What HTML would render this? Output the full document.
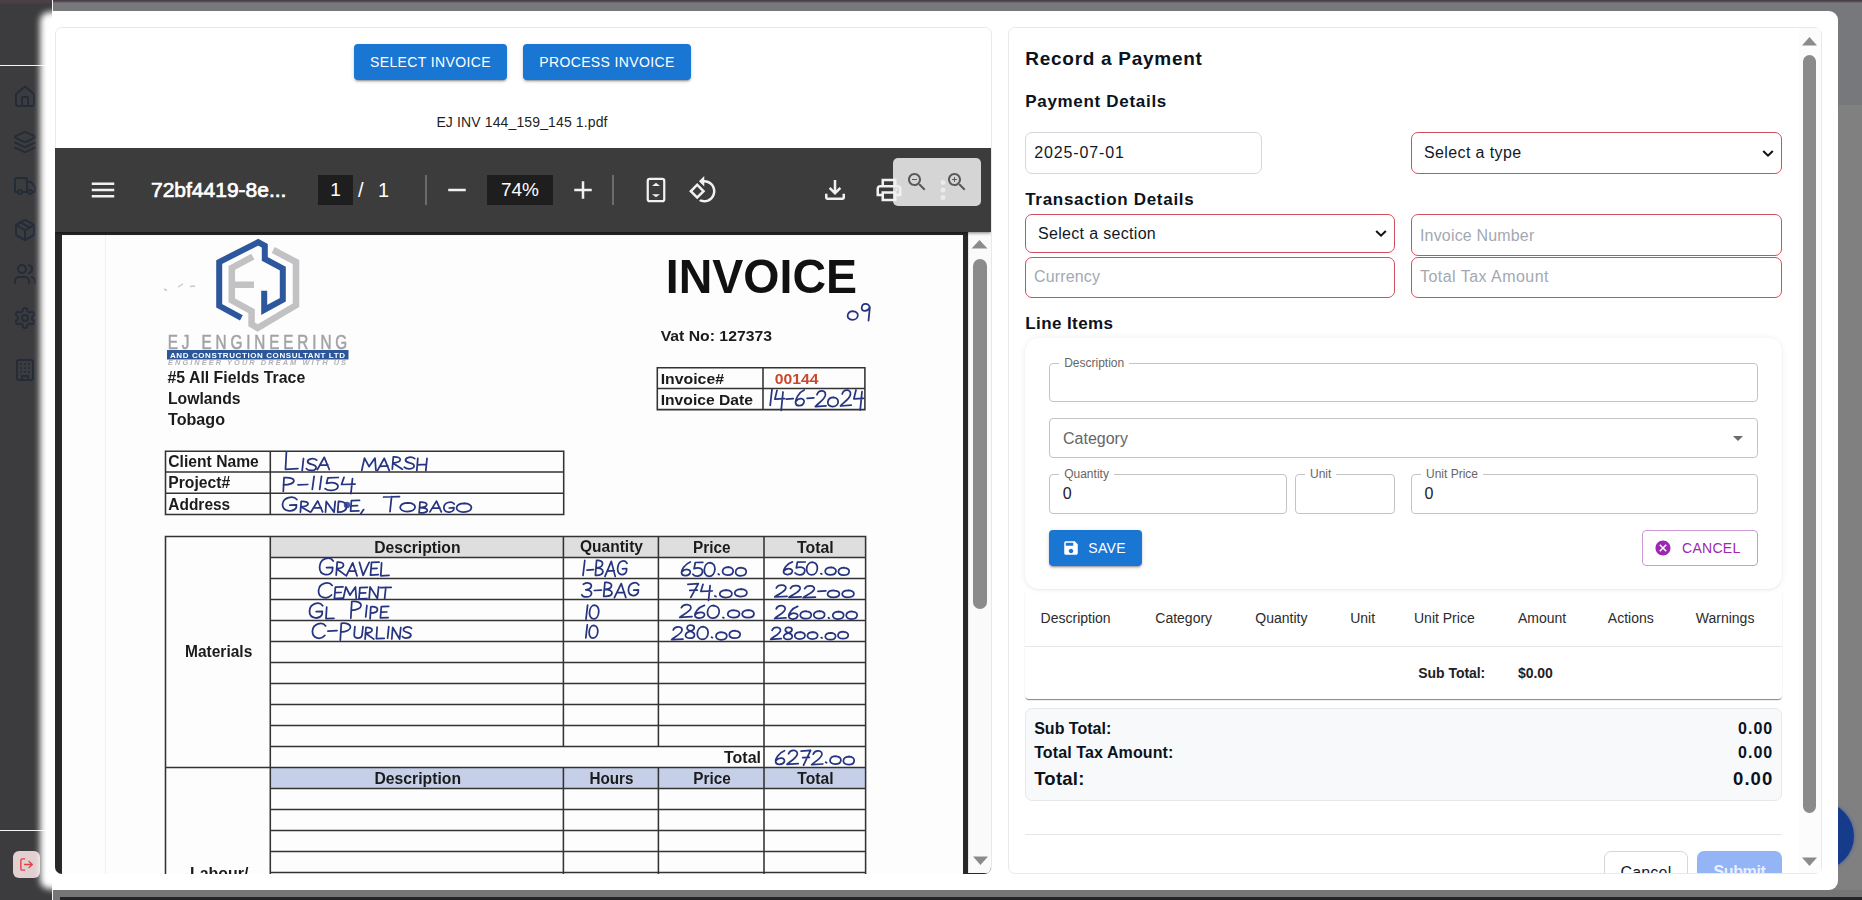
<!DOCTYPE html>
<html lang="en">
<head>
<meta charset="utf-8">
<title>Record a Payment</title>
<style>
*{box-sizing:border-box;margin:0;padding:0}
html,body{width:1862px;height:900px;overflow:hidden}
body{position:relative;background:#808081;font-family:"Liberation Sans",sans-serif;color:#111827}
.abs{position:absolute}
/* backdrop */
#topstrip{left:0;top:0;width:1862px;height:4px;background:linear-gradient(to bottom,#4a3f47 0,#4a3f47 1px,#77787b 3px)}
#botstrip{left:60px;top:897px;width:1802px;height:3px;background:#252527}
#botgray{left:53px;top:890px;width:1809px;height:10px;background:#767678}
#hdrband{left:53px;top:0;width:1809px;height:105px;background:#77787b}
#sidebar{left:0;top:0;width:52px;height:900px;background:#3c3c3e}
#sidetop{left:0;top:0;width:52px;height:5px;background:linear-gradient(to bottom,#4b4047 0,#4b4047 2px,#3c3c3e 5px)}
#sideline{left:52px;top:0;width:1px;height:900px;background:#f4f4f5}
#sidehr{left:0;top:65px;width:52px;height:1px;background:#f4f4f5}
#sidehr2{left:0;top:830px;width:52px;height:1px;background:#f4f4f5}
.sic{left:13px;width:24px;height:24px;stroke:#242b39;fill:none;stroke-width:2;stroke-linecap:round;stroke-linejoin:round}
#logout{left:13px;top:851px;width:27px;height:27px;border-radius:6px;background:#e2cfd0}
#logout svg{position:absolute;left:6px;top:6px;width:15px;height:15px;stroke:#e23d49;fill:none;stroke-width:2.2;stroke-linecap:round;stroke-linejoin:round}
#fab{left:1786px;top:802px;width:68px;height:68px;border-radius:34px;background:#173b8b;box-shadow:0 0 3px 1px rgba(70,95,160,.7)}
/* modal */
#halowrap{left:0;top:0;width:53px;height:900px;overflow:hidden}
#halo{left:39.5px;top:12px;width:60px;height:877px;background:#fff;border-radius:9px;filter:blur(3.2px)}
#modal{left:53px;top:11px;width:1785px;height:879px;background:#fff;border-radius:0 9px 9px 0}
.card{background:#fff;border:1px solid #e8e9ec;border-radius:7px}
#cardL{left:55px;top:27px;width:937px;height:847px;overflow:hidden}
#cardR{left:1008px;top:27px;width:814px;height:847px;overflow:hidden}
/* MUI buttons */
.mbtn{height:36px;border-radius:4px;background:#1976d2;color:#fff;font-size:14px;font-weight:400;letter-spacing:.38px;text-align:center;line-height:36px;box-shadow:0 3px 1px -2px rgba(0,0,0,.2),0 2px 2px 0 rgba(0,0,0,.14),0 1px 5px 0 rgba(0,0,0,.12);}
#fname{left:244px;top:85px;width:444px;text-align:center;letter-spacing:.13px;font-size:14px;line-height:18px;color:#1f1f1f}

/* PDF viewer */
#pdf{left:55px;top:148px;width:936px;height:725.5px;background:#282828;border-radius:0 0 7px 7px;overflow:hidden}
#ptb{left:0;top:0;width:936px;height:84px;background:#3c3c3c;box-shadow:0 1px 3px rgba(0,0,0,.5)}
.ti{fill:#f1f1f1;width:30px;height:30px}
#ptitle{left:96px;top:29px;font-size:21px;font-weight:400;line-height:26px;color:#fff;white-space:nowrap;-webkit-text-stroke:.7px #fff}
.pbox{background:#1e1e1e;color:#fff;font-size:19px;line-height:30px;height:30px;text-align:center}
.psep{width:2px;height:30px;top:27px;background:#6b6b6b}
#pov{left:838px;top:10px;width:88px;height:48px;border-radius:5px;background:#d5d5d5}
#page{left:7px;top:87px;width:901px;height:1275px;background:#fdfdfd;overflow:hidden;color:#151515}
#pscroll{left:912.5px;top:84px;width:24px;height:641px;background:#fafafa;border-left:1px solid #e6e6e6}
.sthumb{background:#8b8b8b;border-radius:7px}
/* form */
#form{left:1009px;top:28px;width:812px;height:845px;overflow:hidden;color:#0f172a}
.h1{font-weight:700;color:#0b1220}
.h2{font-weight:700;color:#0b1220}
.inp{border:1px solid #d4d7dd;border-radius:7px;background:#fff}
.inp.err{border-color:#d04f5e}
.val{color:#111827}
.ph{color:#a3a8b3}
.paper{border-radius:14px;background:#fff;box-shadow:0 0 6px rgba(0,0,0,.07),0 1px 2px rgba(0,0,0,.05)}
.fld{border:1px solid #c4c4c4;border-radius:4px}
.flab{position:absolute;left:9px;top:-9px;padding:0 5px;background:#fff;font-size:12px;line-height:16px;color:#666}
.fval{color:#212121}
.fph{color:#666}
.save{box-shadow:0 3px 1px -2px rgba(0,0,0,.2),0 2px 2px 0 rgba(0,0,0,.14),0 1px 5px 0 rgba(0,0,0,.12)}
.cbtn{border:1px solid #cf9ad9;border-radius:4px;color:#9c27b0;font-size:14px;line-height:34px;letter-spacing:.3px}
.th{color:#2b2b2b}
.tb{font-weight:700;color:#222;letter-spacing:-.05px}
.hr1{background:#e6e6e6}
.tpaper{border-radius:4px;box-shadow:0 2px 1px -1px rgba(0,0,0,.32),0 1px 1px 0 rgba(0,0,0,.2),0 1px 2px 0 rgba(0,0,0,.05)}
.sum{background:#f8f9fb;border:1px solid #e6e8ec;border-radius:7px}
.sl{font-weight:700;color:#0b1220}
.sv{font-weight:700;color:#0b1220;letter-spacing:1.05px;margin-left:1px}
.btnc{border:1px solid #d4d7dd;border-radius:7px;font-size:16px;letter-spacing:.2px;line-height:41px;text-align:center;color:#111827}
.btns{border-radius:7px;background:#93b4f5;font-size:16px;font-weight:700;letter-spacing:-.4px;line-height:41px;text-align:center;color:#eaf0ff}
.vs{background:#fcfcfc}
</style>
</head>
<body>
<!-- BACKDROP -->
<div class="abs" id="hdrband"></div>
<div class="abs" id="topstrip"></div>
<div class="abs" id="botgray"></div>
<div class="abs" id="botstrip"></div>
<div class="abs" id="fab"></div>
<div class="abs" id="sidebar"></div>
<div class="abs" id="sidetop"></div>
<div class="abs" id="sideline"></div>
<div class="abs" id="sidehr"></div>
<div class="abs" id="sidehr2"></div>
<svg class="abs sic" style="top:85px" viewBox="0 0 24 24"><path d="M15 21v-8a1 1 0 0 0-1-1h-4a1 1 0 0 0-1 1v8"/><path d="M3 10a2 2 0 0 1 .709-1.528l7-5.999a2 2 0 0 1 2.582 0l7 5.999A2 2 0 0 1 21 10v9a2 2 0 0 1-2 2H5a2 2 0 0 1-2-2z"/></svg>
<svg class="abs sic" style="top:130px" viewBox="0 0 24 24"><path d="m12.83 2.18a2 2 0 0 0-1.66 0L2.6 6.08a1 1 0 0 0 0 1.83l8.58 3.91a2 2 0 0 0 1.66 0l8.58-3.9a1 1 0 0 0 0-1.83Z"/><path d="m22 17.65-9.17 4.16a2 2 0 0 1-1.66 0L2 17.65"/><path d="m22 12.65-9.17 4.16a2 2 0 0 1-1.66 0L2 12.65"/></svg>
<svg class="abs sic" style="top:174px" viewBox="0 0 24 24"><path d="M14 18V6a2 2 0 0 0-2-2H4a2 2 0 0 0-2 2v11a1 1 0 0 0 1 1h2"/><path d="M15 18H9"/><path d="M19 18h2a1 1 0 0 0 1-1v-3.65a1 1 0 0 0-.22-.624l-3.48-4.35A1 1 0 0 0 17.52 8H14"/><circle cx="17" cy="18" r="2"/><circle cx="7" cy="18" r="2"/></svg>
<svg class="abs sic" style="top:218px" viewBox="0 0 24 24"><path d="M11 21.73a2 2 0 0 0 2 0l7-4A2 2 0 0 0 21 16V8a2 2 0 0 0-1-1.73l-7-4a2 2 0 0 0-2 0l-7 4A2 2 0 0 0 3 8v8a2 2 0 0 0 1 1.73z"/><path d="M12 22V12"/><path d="m3.3 7 7.703 4.734a2 2 0 0 0 1.994 0L20.7 7"/><path d="m7.5 4.27 9 5.15"/></svg>
<svg class="abs sic" style="top:262px" viewBox="0 0 24 24"><path d="M16 21v-2a4 4 0 0 0-4-4H6a4 4 0 0 0-4 4v2"/><circle cx="9" cy="7" r="4"/><path d="M22 21v-2a4 4 0 0 0-3-3.87"/><path d="M16 3.13a4 4 0 0 1 0 7.75"/></svg>
<svg class="abs sic" style="top:306px" viewBox="0 0 24 24"><path d="M12.22 2h-.44a2 2 0 0 0-2 2v.18a2 2 0 0 1-1 1.73l-.43.25a2 2 0 0 1-2 0l-.15-.08a2 2 0 0 0-2.73.73l-.22.38a2 2 0 0 0 .73 2.73l.15.1a2 2 0 0 1 1 1.72v.51a2 2 0 0 1-1 1.74l-.15.09a2 2 0 0 0-.73 2.73l.22.38a2 2 0 0 0 2.73.73l.15-.08a2 2 0 0 1 2 0l.43.25a2 2 0 0 1 1 1.73V20a2 2 0 0 0 2 2h.44a2 2 0 0 0 2-2v-.18a2 2 0 0 1 1-1.73l.43-.25a2 2 0 0 1 2 0l.15.08a2 2 0 0 0 2.73-.73l.22-.39a2 2 0 0 0-.73-2.73l-.15-.08a2 2 0 0 1-1-1.74v-.5a2 2 0 0 1 1-1.74l.15-.09a2 2 0 0 0 .73-2.73l-.22-.38a2 2 0 0 0-2.73-.73l-.15.08a2 2 0 0 1-2 0l-.43-.25a2 2 0 0 1-1-1.73V4a2 2 0 0 0-2-2z"/><circle cx="12" cy="12" r="3"/></svg>
<svg class="abs sic" style="top:358px" viewBox="0 0 24 24"><rect width="16" height="20" x="4" y="2" rx="2" ry="2"/><path d="M9 22v-4h6v4"/><path d="M8 6h.01"/><path d="M16 6h.01"/><path d="M12 6h.01"/><path d="M12 10h.01"/><path d="M12 14h.01"/><path d="M16 10h.01"/><path d="M16 14h.01"/><path d="M8 10h.01"/><path d="M8 14h.01"/></svg>
<div class="abs" id="logout"><svg viewBox="0 0 24 24"><path d="M9 21H5a2 2 0 0 1-2-2V5a2 2 0 0 1 2-2h4"/><polyline points="16 17 21 12 16 7"/><line x1="21" x2="9" y1="12" y2="12"/></svg></div>
<!-- MODAL -->
<div class="abs" id="halowrap"><div class="abs" id="halo"></div></div>
<div class="abs" id="modal"></div>
<div class="abs card" id="cardL">
  <div class="abs mbtn" style="left:298px;top:16px;width:153px">SELECT INVOICE</div>
  <div class="abs mbtn" style="left:467px;top:16px;width:168px">PROCESS INVOICE</div>
  <div class="abs" id="fname">EJ INV 144_159_145 1.pdf</div>
</div>
<div class="abs" id="pdf">
  <div class="abs" id="page">
  <!--PAGE0-->
<svg class="abs" style="left:0;top:0;filter:blur(.45px)" width="901" height="640" viewBox="0 0 901 640" font-family="Liberation Sans, sans-serif">
<rect x="43" y="0" width="1" height="640" fill="#f1f1f1"/><rect x="906" y="0" width="1" height="640" fill="#f1f1f1"/>
<path d="M102,54 l3,1.500 M116,52 l5,-3 M128,51.500 l5,-.5" stroke="#c9c9c9" stroke-width="1.400" fill="none"/>
<g fill="none" stroke-linejoin="miter" stroke-linecap="butt">
<path d="M211.2,15 L234,27 L234,70.2 L195.600,93 L189.600,89.400 L189.600,76.200 L169.800,65.400 L169.800,33 L190.800,21.600 M169.800,49.800 L192,49.800" stroke="#c2c2c4" stroke-width="6.5"/>
<path d="M179.400,82.800 L157.200,70.800 L157.200,27 L196.200,7.200 L202.800,10.800 L202.800,24 L220.800,33.600 L220.800,64.800 L202.200,75 L202.200,55.800" stroke="#2c579c" stroke-width="6"/>
</g>
<g transform="translate(105.8,114.2) scale(.78,1)"><text x="0" y="0" font-size="19.6" fill="#a3a3a7" stroke="#a3a3a7" stroke-width=".55" textLength="230" lengthAdjust="spacing">EJ ENGINEERING</text></g>
<rect x="105" y="115" width="181.500" height="9.500" fill="#2d5698"/>
<text x="108" y="122.8" font-size="8" font-weight="700" fill="#fff" textLength="175" lengthAdjust="spacing">AND CONSTRUCTION CONSULTANT LTD</text>
<text x="106" y="130.2" font-size="7.4" font-style="italic" font-weight="700" fill="#b2b2b6" textLength="178" lengthAdjust="spacing">ENGINEER YOUR DREAM WITH US</text>
<text x="105.5" y="148" font-size="16.2" font-weight="700" fill="#1b1b1b" textLength="137.7" lengthAdjust="spacingAndGlyphs">#5 All Fields Trace</text>
<text x="106" y="169" font-size="16.2" font-weight="700" fill="#1b1b1b" textLength="72.5" lengthAdjust="spacingAndGlyphs">Lowlands</text>
<text x="106" y="190" font-size="16.2" font-weight="700" fill="#1b1b1b" textLength="57" lengthAdjust="spacingAndGlyphs">Tobago</text>
<text x="603.8" y="57.6" font-size="48.5" font-weight="700" fill="#111" textLength="191.2" lengthAdjust="spacingAndGlyphs">INVOICE</text>
<text x="598.7" y="105.6" font-size="15.5" font-weight="700" fill="#1b1b1b" textLength="111.3" lengthAdjust="spacingAndGlyphs">Vat No: 127373</text>
<text x="598.7" y="148.9" font-size="15.5" font-weight="700" fill="#1b1b1b" textLength="63.3" lengthAdjust="spacingAndGlyphs">Invoice#</text>
<text x="598.7" y="169.5" font-size="15.5" font-weight="700" fill="#1b1b1b" textLength="92.3" lengthAdjust="spacingAndGlyphs">Invoice Date</text>
<text x="712.7" y="148.9" font-size="15.5" font-weight="700" fill="#c9482c" textLength="43.7" lengthAdjust="spacingAndGlyphs">00144</text>
<text x="106.3" y="231.9" font-size="15.8" font-weight="700" fill="#1b1b1b" textLength="90.5" lengthAdjust="spacingAndGlyphs">Client Name</text>
<text x="106.3" y="253.2" font-size="15.8" font-weight="700" fill="#1b1b1b" textLength="61.9" lengthAdjust="spacingAndGlyphs">Project#</text>
<text x="106.3" y="275.2" font-size="15.8" font-weight="700" fill="#1b1b1b" textLength="61.9" lengthAdjust="spacingAndGlyphs">Address</text>
<rect x="208.3" y="301.5" width="595.3" height="21.0" fill="#dedede"/>
<rect x="208.3" y="532.5" width="595.3" height="21.0" fill="#c6cfe8"/>
<text x="312.2" y="318" font-size="16" font-weight="700" fill="#1b1b1b" textLength="86.3" lengthAdjust="spacingAndGlyphs">Description</text>
<text x="518" y="317.4" font-size="16" font-weight="700" fill="#1b1b1b" textLength="63" lengthAdjust="spacingAndGlyphs">Quantity</text>
<text x="631" y="317.8" font-size="16" font-weight="700" fill="#1b1b1b" textLength="37.5" lengthAdjust="spacingAndGlyphs">Price</text>
<text x="735" y="317.8" font-size="16" font-weight="700" fill="#1b1b1b" textLength="36.6" lengthAdjust="spacingAndGlyphs">Total</text>
<text x="123" y="421.7" font-size="16.3" font-weight="700" fill="#1b1b1b" textLength="67.3" lengthAdjust="spacingAndGlyphs">Materials</text>
<text x="662" y="527.7" font-size="16" font-weight="700" fill="#1b1b1b" textLength="37" lengthAdjust="spacingAndGlyphs">Total</text>
<text x="312.5" y="549" font-size="16" font-weight="700" fill="#1b1b1b" textLength="86.5" lengthAdjust="spacingAndGlyphs">Description</text>
<text x="527.5" y="549" font-size="16" font-weight="700" fill="#1b1b1b" textLength="44.0" lengthAdjust="spacingAndGlyphs">Hours</text>
<text x="631.3" y="549" font-size="16" font-weight="700" fill="#1b1b1b" textLength="37.4" lengthAdjust="spacingAndGlyphs">Price</text>
<text x="735.3" y="549" font-size="16" font-weight="700" fill="#1b1b1b" textLength="36.2" lengthAdjust="spacingAndGlyphs">Total</text>
<text x="128" y="643.5" font-size="16.3" font-weight="700" fill="#1b1b1b" textLength="58.5" lengthAdjust="spacingAndGlyphs">Labour/</text>
<path d="M595.3,132.8H802.9 M595.3,153.5H802.9 M595.3,174.6H802.9 M595.3,132V175.4 M701,132V175.4 M802.9,132V175.4 M103.5,216.2H501.7 M103.5,237H501.7 M103.5,258.2H501.7 M103.5,279.4H501.7 M103.5,215.4V280.2 M208.3,215.4V280.2 M501.7,215.4V280.2 M103.5,301.5H803.6 M208.3,322.5H803.6 M208.3,343.5H803.6 M208.3,364.5H803.6 M208.3,385.5H803.6 M208.3,406.5H803.6 M208.3,427.5H803.6 M208.3,448.5H803.6 M208.3,469.5H803.6 M208.3,490.5H803.6 M208.3,511.5H803.6 M103.5,532.5H803.6 M208.3,553.5H803.6 M208.3,574.5H803.6 M208.3,595.5H803.6 M208.3,616.5H803.6 M208.3,637.5H803.6 M208.3,658.5H803.6 M208.3,679.5H803.6 M208.3,700.5H803.6 M103.5,300.7V700.5 M208.3,300.7V700.5 M803.6,300.7V700.5 M501.4,301.5V511.5 M596.4,301.5V511.5 M702,301.5V700.5 M501.4,532.5V700.5 M596.4,532.5V700.5" stroke="#333" stroke-width="1.55" fill="none"/>
<path d="M224.4,217.3 L223.5,234.3 L235.9,233.7 M241.5,223.5 L240.2,235.7 M254.7,225.1 C252.0,222.7 245.2,223.3 245.7,227.0 C246.2,230.0 254.4,228.8 254.1,232.5 C253.9,236.2 246.4,236.2 244.4,233.7 M255.4,234.5 L262.3,222.3 L267.3,234.5 M258.0,230.2 L265.9,229.8 M299.8,235.3 L302.5,223.1 L307.1,231.6 L313.0,223.1 L313.9,235.3 M315.4,235.6 L322.3,223.3 L327.3,235.6 M318.0,231.3 L325.9,230.9 M330.3,234.2 L331.3,221.9 C340.2,221.3 341.2,227.4 330.8,228.1 L340.4,234.2 M352.7,223.6 C349.9,221.2 343.2,221.8 343.6,225.5 C344.1,228.5 352.4,227.3 352.1,231.0 C351.8,234.6 344.4,234.6 342.3,232.2 M355.8,223.4 L354.8,235.7 M365.0,223.4 L363.8,235.7 M355.3,229.8 L364.3,229.3 M221.3,256.4 L222.0,242.7 C235.7,241.7 235.0,249.9 221.4,249.9 M236.0,249.8 L245.7,249.5 M252.1,241.3 L250.3,254.3 M259.5,241.4 L257.7,254.4 M276.2,242.5 L265.9,242.8 L264.5,248.4 C272.4,246.4 277.0,249.0 275.8,252.3 C274.5,256.2 265.8,256.2 263.1,253.6 M282.0,242.4 L279.5,249.5 L293.1,249.1 M290.5,243.7 L288.9,258.6 M234.9,264.5 C231.3,260.0 221.1,262.3 220.6,269.0 C220.0,276.5 230.8,278.0 234.2,272.8 L234.5,269.8 L227.9,270.1 M238.4,277.1 L239.2,266.3 C247.9,265.7 248.9,271.1 238.8,271.7 L248.1,277.1 M249.1,276.8 L255.7,266.0 L260.6,276.8 M251.6,273.0 L259.2,272.7 M263.5,277.2 L264.3,266.4 L272.1,277.2 L273.2,266.4 M276.5,266.4 L275.7,277.2 C287.1,277.8 288.0,265.9 276.5,266.4 M297.5,265.4 L289.4,265.6 L288.6,276.2 L296.9,275.9 M289.0,270.8 L295.5,270.6 M301.6,274.6 L298.6,279.1 M321.6,262.0 L337.5,261.6 M329.6,261.6 L328.0,276.6 M346.4,267.8 C336.0,267.8 335.3,276.5 345.3,276.5 C355.3,276.5 356.0,267.8 345.6,268.0 M358.0,267.1 L357.1,277.9 M358.0,267.1 C367.3,266.6 366.9,272.5 357.5,272.5 C368.3,272.5 367.8,278.4 357.1,277.9 M367.9,276.9 L374.5,266.1 L379.3,276.9 M370.3,273.2 L377.9,272.8 M392.2,269.0 C389.6,265.7 382.3,267.3 381.9,272.2 C381.5,277.6 389.3,278.7 391.7,274.9 L391.9,272.7 L387.2,273.0 M402.7,268.3 C392.4,268.3 391.7,277.0 401.6,277.0 C411.6,277.0 412.3,268.3 401.9,268.4 M271.2,326.0 C267.9,320.6 258.3,323.3 257.7,331.4 C256.9,340.4 267.1,342.2 270.4,335.9 L270.7,332.3 L264.5,332.7 M274.2,340.1 L275.2,327.2 C283.3,326.5 284.2,333.0 274.7,333.7 L283.3,340.1 M284.3,340.8 L290.7,327.8 L295.0,340.8 M286.6,336.2 L293.8,335.9 M297.4,327.3 L301.1,340.3 L307.1,327.3 M317.1,327.1 L309.5,327.4 L308.5,340.1 L316.3,339.7 M309.0,333.6 L315.1,333.3 M319.6,327.8 L318.8,340.8 L327.0,340.4 M270.2,350.4 C266.8,345.6 257.2,348.0 256.6,355.2 C255.9,363.2 265.3,364.8 269.5,360.0 M281.0,351.9 L273.4,352.2 L272.4,363.5 L280.4,363.1 M272.9,357.7 L279.1,357.5 M281.3,363.6 L283.9,352.0 L288.0,360.1 L293.4,352.0 L294.3,363.6 M305.5,352.3 L297.9,352.6 L297.0,363.8 L304.9,363.5 M297.4,358.1 L303.6,357.9 M307.2,363.5 L308.1,351.9 L315.4,363.5 L316.6,351.9 M318.3,352.6 L329.2,352.3 M323.8,352.3 L322.6,363.8 M260.7,370.8 C257.5,366.0 248.1,368.4 247.6,375.6 C246.9,383.6 256.8,385.2 260.0,379.6 L260.3,376.4 L254.2,376.7 M264.7,372.1 L264.0,383.6 L272.0,383.3 M288.8,383.3 L289.8,366.5 C302.7,365.3 301.9,375.3 289.1,375.3 M304.9,370.5 L303.7,382.0 M308.1,383.9 L308.8,371.8 C318.1,370.9 317.5,378.1 308.3,378.1 M326.7,371.4 L319.3,371.7 L318.4,382.9 L326.1,382.6 M318.9,377.2 L324.8,377.0 M263.6,390.9 C260.4,386.1 251.1,388.5 250.5,395.7 C249.9,403.7 258.8,405.3 262.8,400.5 M265.9,396.1 L275.0,395.6 M278.3,405.1 L279.3,388.3 C292.0,387.0 291.2,397.1 278.6,397.1 M292.9,391.7 L292.2,399.7 C291.9,404.3 299.7,404.3 300.1,399.7 L301.0,391.7 M303.1,404.1 L304.0,392.5 C311.8,392.0 312.7,397.7 303.5,398.3 L311.9,404.1 M315.1,392.2 L314.4,403.7 L322.2,403.4 M326.8,391.6 L325.6,403.2 M329.8,404.0 L330.7,392.5 L337.6,404.0 L338.8,392.5 M349.5,393.3 C347.1,391.0 341.1,391.6 341.5,395.0 C341.9,397.9 349.2,396.8 348.9,400.2 C348.6,403.7 342.1,403.7 340.4,401.4 M522.8,325.5 L521.0,340.5 M525.0,335.1 L531.5,334.6 M534.6,325.3 L533.4,340.3 M534.6,325.3 C543.0,324.6 542.3,332.8 534.0,332.8 C543.6,332.8 543.0,341.1 533.4,340.3 M543.0,341.4 L549.3,326.4 L553.2,341.4 M545.3,336.1 L552.2,335.7 M565.0,328.3 C562.8,323.8 556.3,326.0 555.7,332.8 C555.1,340.3 562.0,341.8 564.4,336.5 L564.6,333.5 L560.4,333.8 M521.4,349.3 C525.9,346.5 530.7,348.6 529.0,352.1 C528.1,354.2 523.8,354.9 523.8,354.9 C532.4,354.9 530.3,362.6 524.0,361.9 C521.8,361.9 520.5,361.2 519.9,359.8 M532.3,355.5 L539.4,355.1 M542.9,347.4 L541.7,361.4 M542.9,347.4 C552.2,346.7 551.5,354.4 542.3,354.4 C553.0,354.4 552.4,362.1 541.7,361.4 M552.4,362.6 L559.2,348.6 L563.8,362.6 M554.9,357.7 L562.5,357.3 M576.8,350.0 C574.3,345.8 567.0,347.9 566.5,354.2 C565.9,361.2 573.6,362.6 576.1,357.7 L576.4,354.9 L571.7,355.2 M525.6,370.1 L524.0,384.1 M532.9,370.2 C526.6,369.9 525.4,383.9 531.6,383.9 C537.8,383.9 538.9,369.9 532.2,370.4 M525.3,389.9 L523.8,402.9 M532.2,390.4 C526.3,390.1 525.2,403.1 531.0,403.1 C536.8,403.1 537.8,390.1 531.5,390.6 M628.3,327.0 C622.5,329.1 619.2,335.4 619.6,338.2 C620.1,341.7 627.2,341.7 628.2,337.5 C628.8,334.0 622.9,333.3 620.0,336.8 M640.8,327.3 L633.3,327.5 L632.1,333.6 C637.9,331.5 641.3,334.3 640.3,337.8 C639.2,342.0 632.9,342.0 630.9,339.2 M648.5,327.6 C641.1,327.3 640.0,341.3 647.1,341.3 C654.2,341.3 655.3,327.3 647.6,327.8 M656.3,339.0 L657.1,339.6 M666.5,332.1 C659.1,332.1 658.5,340.2 665.6,340.2 C672.7,340.2 673.3,332.1 665.9,332.2 M679.6,332.7 C672.2,332.7 671.5,340.8 678.6,340.8 C685.7,340.8 686.4,332.7 679.0,332.8 M625.8,349.3 L636.4,348.6 L628.8,362.3 M627.8,355.4 L635.3,355.1 M641.0,349.3 L638.8,356.4 L650.2,356.0 M648.1,350.6 L646.5,365.5 M652.9,361.0 L653.9,361.5 M664.5,355.0 C656.0,355.0 655.4,362.5 663.6,362.5 C671.7,362.5 672.3,355.0 663.8,355.2 M679.5,354.0 C671.0,354.0 670.4,361.5 678.5,361.5 C686.7,361.5 687.3,354.0 678.8,354.1 M619.4,372.6 C621.3,368.1 629.9,368.7 628.8,373.3 C627.7,377.2 620.4,379.8 617.8,382.4 L630.0,381.7 M642.4,370.3 C636.0,372.3 632.4,378.1 633.0,380.7 C633.5,384.0 641.4,384.0 642.5,380.1 C643.0,376.8 636.5,376.2 633.4,379.4 M652.2,370.5 C644.0,370.2 643.0,383.2 650.9,383.2 C658.7,383.2 659.8,370.2 651.2,370.8 M661.0,382.4 L661.9,382.9 M672.2,375.1 C664.1,375.1 663.5,382.6 671.3,382.6 C679.2,382.6 679.8,375.1 671.6,375.3 M686.7,375.1 C678.5,375.1 677.9,382.6 685.8,382.6 C693.7,382.6 694.3,375.1 686.1,375.2 M611.2,395.0 C613.0,390.4 621.0,391.1 619.9,395.6 C618.9,399.5 612.1,402.1 609.7,404.7 L621.0,404.1 M628.4,396.1 C622.8,394.1 625.3,389.6 628.9,390.2 C633.3,390.5 633.6,394.8 628.4,396.1 C621.8,398.0 622.1,403.2 627.9,403.2 C633.7,403.2 634.1,398.0 628.4,396.1 M641.5,391.6 C634.0,391.4 633.0,404.4 640.2,404.4 C647.5,404.4 648.5,391.4 640.6,391.9 M649.6,402.2 L650.4,402.7 M660.0,397.2 C652.4,397.2 651.8,404.8 659.1,404.8 C666.4,404.8 667.0,397.2 659.4,397.4 M673.3,395.7 C665.8,395.7 665.2,403.2 672.4,403.2 C679.7,403.2 680.3,395.7 672.8,395.9 M730.4,326.8 C724.5,328.7 721.1,334.6 721.6,337.2 C722.1,340.4 729.3,340.4 730.3,336.5 C730.9,333.3 724.9,332.6 722.0,335.9 M743.1,327.0 L735.4,327.2 L734.3,332.8 C740.2,330.9 743.6,333.5 742.6,336.7 C741.6,340.6 735.1,340.6 733.1,338.0 M750.8,327.1 C743.4,326.9 742.3,339.9 749.5,339.9 C756.7,339.9 757.8,326.9 750.0,327.4 M758.9,338.6 L759.7,339.1 M769.1,332.3 C761.7,332.3 761.1,339.9 768.3,339.9 C775.5,339.9 776.1,332.3 768.6,332.5 M782.4,332.7 C774.9,332.7 774.3,340.2 781.5,340.2 C788.7,340.2 789.3,332.7 781.8,332.9 M714.3,353.0 C716.2,348.8 724.9,349.4 723.7,353.6 C722.7,357.2 715.4,359.6 712.8,362.0 L725.0,361.4 M728.5,353.4 C730.4,349.2 739.1,349.8 738.0,354.0 C736.9,357.6 729.6,360.0 727.0,362.4 L739.2,361.8 M742.7,353.7 C744.7,349.5 753.3,350.1 752.2,354.3 C751.1,357.9 743.8,360.3 741.2,362.7 L753.4,362.1 M755.9,356.3 L763.8,355.9 M772.1,355.4 C763.9,355.4 763.3,362.4 771.2,362.4 C779.1,362.4 779.7,355.4 771.5,355.6 M786.7,355.3 C778.4,355.3 777.9,362.3 785.8,362.3 C793.7,362.3 794.2,355.3 786.0,355.5 M714.2,373.8 C716.1,369.2 724.1,369.9 723.0,374.4 C721.9,378.3 715.1,380.9 712.7,383.5 L724.0,382.9 M735.7,371.3 C729.7,373.2 726.3,379.1 726.8,381.7 C727.3,384.9 734.6,384.9 735.7,381.0 C736.2,377.8 730.1,377.1 727.2,380.4 M744.4,376.2 C736.7,376.2 736.1,383.7 743.5,383.7 C750.8,383.7 751.4,376.2 743.8,376.4 M757.8,376.0 C750.2,376.0 749.6,383.5 756.9,383.5 C764.2,383.5 764.8,376.0 757.2,376.1 M766.4,382.7 L767.2,383.2 M776.8,376.5 C769.2,376.5 768.6,384.0 775.9,384.0 C783.2,384.0 783.9,376.5 776.2,376.6 M790.3,376.4 C782.7,376.4 782.1,384.0 789.4,384.0 C796.7,384.0 797.3,376.4 789.7,376.6 M710.1,395.3 C711.8,391.1 719.3,391.7 718.3,395.9 C717.3,399.5 710.9,401.9 708.7,404.3 L719.3,403.7 M726.4,397.8 C721.1,396.0 723.5,391.8 726.9,392.4 C731.0,392.7 731.3,396.6 726.4,397.8 C720.1,399.6 720.4,404.4 725.9,404.4 C731.4,404.4 731.8,399.6 726.4,397.8 M738.4,397.1 C731.3,397.1 730.7,404.0 737.6,404.0 C744.5,404.0 745.0,397.1 737.9,397.2 M751.1,397.1 C743.9,397.1 743.4,404.0 750.3,404.0 C757.2,404.0 757.7,397.1 750.5,397.2 M759.2,402.6 L760.0,403.1 M769.0,397.8 C761.8,397.8 761.3,404.7 768.2,404.7 C775.1,404.7 775.6,397.8 768.4,397.9 M781.7,396.7 C774.5,396.7 774.0,403.7 780.8,403.7 C787.7,403.7 788.3,396.7 781.1,396.9 M722.5,515.7 C716.6,517.8 713.2,524.1 713.7,526.9 C714.1,530.4 721.3,530.4 722.4,526.2 C723.0,522.7 717.0,522.0 714.1,525.5 M726.6,518.8 C728.4,513.9 736.3,514.6 735.2,519.5 C734.1,523.7 727.4,526.5 725.0,529.3 L736.2,528.6 M739.1,516.1 L748.6,515.4 L741.6,530.1 M740.7,522.7 L747.4,522.4 M751.2,519.2 C753.0,514.3 760.9,515.0 759.8,519.9 C758.7,524.1 752.0,526.9 749.6,529.7 L760.8,529.0 M763.7,527.2 L764.6,527.8 M774.1,521.1 C766.6,521.1 765.9,529.2 773.2,529.2 C780.4,529.2 781.1,521.1 773.5,521.3 M787.4,521.6 C779.9,521.6 779.2,529.7 786.5,529.7 C793.7,529.7 794.4,521.6 786.8,521.7 M710.0,154.4 L708.2,170.4 M715.0,155.4 L712.9,164.2 L722.6,163.7 M721.0,157.0 L719.2,175.4 M724.3,164.1 L731.2,163.6 M742.2,155.0 C736.5,157.4 733.2,164.6 733.6,167.8 C734.0,171.8 740.9,171.8 742.0,167.0 C742.6,163.0 736.8,162.2 734.0,166.2 M745.0,163.3 L751.9,162.8 M755.0,159.6 C756.9,154.0 764.4,154.8 763.3,160.4 C762.2,165.2 755.7,168.4 753.4,171.6 L764.1,170.8 M771.7,162.3 C764.5,162.3 763.7,171.6 770.6,171.6 C777.6,171.6 778.3,162.3 771.1,162.5 M780.2,159.0 C782.0,153.4 789.5,154.2 788.4,159.8 C787.3,164.6 780.8,167.8 778.5,171.0 L789.2,170.2 M794.0,155.0 L791.9,163.8 L801.6,163.3 M800.0,156.6 L798.2,175.0 M791.4,76.1 C784.3,76.1 783.6,84.8 790.4,84.8 C797.2,84.8 797.9,76.1 790.8,76.3 M807.8,72.9 C806.9,67.6 800.1,67.6 799.7,72.9 C799.3,77.4 806.2,76.6 807.9,72.1 L806.5,85.6" stroke="#27347f" stroke-width="1.75" fill="none" stroke-linecap="round" stroke-linejoin="round"/>
<circle cx="285" cy="270" r="3.2" fill="#2b3c8f" opacity=".85"/>
</svg>
<!--PAGE1-->
  </div>
  <div class="abs" id="pscroll">
    <svg class="abs" style="left:2px;top:7px" width="17" height="10" viewBox="0 0 17 10"><path d="M.5 9.500 8.500 1 16.500 9.500Z" fill="#8b8b8b"/></svg>
    <div class="abs sthumb" style="left:4px;top:27px;width:14px;height:350px"></div>
    <svg class="abs" style="left:3px;top:624px" width="17" height="10" viewBox="0 0 17 10"><path d="M1 .5 L8.5 9 L16 .5Z" fill="#8b8b8b"/></svg>
  </div>
  <div class="abs" id="ptb">
    <svg class="abs ti" style="left:33px;top:27px" viewBox="0 0 24 24"><path d="M3 18h18v-2H3v2zm0-5h18v-2H3v2zm0-7v2h18V6H3z"/></svg>
    <div class="abs" id="ptitle">72bf4419-8e...</div>
    <div class="abs pbox" style="left:263px;top:27px;width:35px">1</div>
    <div class="abs" style="left:303px;top:27px;font-size:20px;line-height:30px;color:#fff">/</div>
    <div class="abs" style="left:323px;top:27px;font-size:20px;line-height:30px;color:#fff">1</div>
    <div class="abs psep" style="left:370px"></div>
    <svg class="abs ti" style="left:387px;top:27px" viewBox="0 0 24 24"><path d="M19 13H5v-2h14v2z"/></svg>
    <div class="abs pbox" style="left:432px;top:27px;width:66px">74%</div>
    <svg class="abs ti" style="left:513px;top:27px" viewBox="0 0 24 24"><path d="M19 13h-6v6h-2v-6H5v-2h6V5h2v6h6v2z"/></svg>
    <div class="abs psep" style="left:557px"></div>
    <!-- fit to page -->
    <svg class="abs ti" style="left:586px;top:27px" viewBox="0 0 24 24"><rect x="5.400" y="3.100" width="13.200" height="17.800" rx="1.600" fill="none" stroke="#f1f1f1" stroke-width="1.800"/><path d="M12 6.200 15.200 8.700H8.800zM12 17.800 15.200 15.300H8.800z"/></svg>
    <!-- rotate -->
    <svg class="abs ti" style="left:633px;top:27px" viewBox="0 0 24 24"><path d="M7.340 6.410.860 12.900l6.490 6.480 6.490-6.480L7.340 6.410zM3.690 12.900l3.660-3.660L11 12.900l-3.660 3.660-3.650-3.660zm15.670-6.260C17.610 4.880 15.300 4 13 4V.760L8.760 5 13 9.240V6c1.790 0 3.580.680 4.950 2.050 2.730 2.730 2.730 7.170 0 9.900C16.580 19.320 14.790 20 13 20c-.970 0-1.940-.210-2.840-.610l-1.490 1.490C10.020 21.620 11.510 22 13 22c2.300 0 4.610-.880 6.360-2.640 3.520-3.510 3.520-9.210 0-12.720z"/></svg>
    <!-- download -->
    <svg class="abs ti" style="left:765px;top:27px" viewBox="0 0 24 24"><path d="M18 15v3H6v-3H4v3c0 1.100.9 2 2 2h12c1.100 0 2-.9 2-2v-3h-2zm-1-4-1.410-1.410L13 12.170V4h-2v8.170L8.410 9.590 7 11l5 5 5-5z"/></svg>
    <div class="abs" id="pov">
      <svg class="abs" style="left:12px;top:12px;width:24px;height:24px;fill:#5a5a5a" viewBox="0 0 24 24"><path d="M15.500 14h-.79l-.28-.27C15.410 12.590 16 11.110 16 9.500 16 5.910 13.090 3 9.500 3S3 5.910 3 9.500 5.910 16 9.500 16c1.610 0 3.090-.59 4.230-1.570l.27.28v.79l5 4.990L20.490 19l-4.990-5zm-6 0C7.010 14 5 11.990 5 9.500S7.010 5 9.500 5 14 7.010 14 9.500 11.990 14 9.500 14zM7 9h5v1H7z"/></svg>
      <svg class="abs" style="left:52px;top:12px;width:24px;height:24px;fill:#5a5a5a" viewBox="0 0 24 24"><path d="M15.500 14h-.79l-.28-.27C15.410 12.590 16 11.110 16 9.500 16 5.910 13.090 3 9.500 3S3 5.910 3 9.500 5.910 16 9.500 16c1.610 0 3.090-.59 4.230-1.570l.27.28v.79l5 4.990L20.490 19l-4.990-5zm-6 0C7.010 14 5 11.990 5 9.500S7.010 5 9.500 5 14 7.010 14 9.500 11.990 14 9.500 14zM12 10h-2v2H9v-2H7V9h2V7h1v2h2v1z"/></svg>
    </div>
    <!-- print -->
    <svg class="abs ti" style="left:819px;top:27px" viewBox="0 0 24 24"><path d="M19 8h-1V3H6v5H5c-1.660 0-3 1.340-3 3v6h4v4h12v-4h4v-6c0-1.660-1.340-3-3-3zM8 5h8v3H8V5zm8 12v2H8v-4h8v2zm2-2v-2H6v2H4v-4c0-.55.45-1 1-1h14c.55 0 1 .45 1 1v4h-2z"/><circle cx="18" cy="11.500" r="1"/></svg>
    <!-- more vert -->
    <svg class="abs ti" style="left:873px;top:27px;fill:#eee;opacity:.9" viewBox="0 0 24 24"><path d="M12 8c1.100 0 2-.9 2-2s-.9-2-2-2-2 .9-2 2 .9 2 2 2zm0 2c-1.100 0-2 .9-2 2s.9 2 2 2 2-.9 2-2-.9-2-2-2zm0 6c-1.100 0-2 .9-2 2s.9 2 2 2 2-.9 2-2-.9-2-2-2z"/></svg>
  </div>
</div>

<div class="abs card" id="cardR"></div>
<!--FORM0-->
<div class="abs" id="form">
<div class="abs h1" style="left:16.3px;top:18.0px;font-size:19px;line-height:25px;white-space:nowrap;letter-spacing:.72px">Record a Payment</div>
<div class="abs h2" style="left:16.2px;top:63.1px;font-size:17px;line-height:22px;white-space:nowrap;letter-spacing:.7px">Payment Details</div>
<div class="abs inp" style="left:16.3px;top:104.3px;width:236.4px;height:41.5px;"></div>
<div class="abs val" style="left:25.3px;top:113.6px;font-size:16px;line-height:21px;white-space:nowrap;letter-spacing:.85px">2025-07-01</div>
<div class="abs inp err" style="left:402px;top:104.3px;width:371px;height:41.5px;"><svg class="abs" style="right:5px;top:50%;margin-top:-8px" width="16" height="16" viewBox="0 0 16 16"><path d="M3.200 6 8 10.700 12.800 6" fill="none" stroke="#111" stroke-width="2"/></svg></div>
<div class="abs val" style="left:415px;top:114.0px;font-size:16px;line-height:21px;white-space:nowrap;letter-spacing:.38px">Select a type</div>
<div class="abs h2" style="left:16.2px;top:161.2px;font-size:17px;line-height:22px;white-space:nowrap;letter-spacing:.7px">Transaction Details</div>
<div class="abs inp err" style="left:16.3px;top:186px;width:369.7px;height:38.6px;"><svg class="abs" style="right:5px;top:50%;margin-top:-8px" width="16" height="16" viewBox="0 0 16 16"><path d="M3.200 6 8 10.700 12.800 6" fill="none" stroke="#111" stroke-width="2"/></svg></div>
<div class="abs val" style="left:29px;top:195.0px;font-size:16px;line-height:21px;white-space:nowrap;letter-spacing:.32px">Select a section</div>
<div class="abs inp err" style="left:402px;top:186px;width:371px;height:41.5px;"></div>
<div class="abs ph" style="left:411px;top:196.5px;font-size:16px;line-height:21px;white-space:nowrap;letter-spacing:.17px">Invoice Number</div>
<div class="abs inp err" style="left:16.3px;top:228.5px;width:369.7px;height:41.5px;"></div>
<div class="abs ph" style="left:25px;top:238.0px;font-size:16px;line-height:21px;white-space:nowrap;letter-spacing:.15px">Currency</div>
<div class="abs inp err" style="left:402px;top:228.5px;width:371px;height:41.5px;"></div>
<div class="abs ph" style="left:411px;top:238.0px;font-size:16px;line-height:21px;white-space:nowrap;letter-spacing:.46px">Total Tax Amount</div>
<div class="abs h2" style="left:16.2px;top:285.1px;font-size:17px;line-height:22px;white-space:nowrap;letter-spacing:.42px">Line Items</div>
<div class="abs paper" style="left:16.3px;top:309.6px;width:756.7px;height:251.4px;"></div>
<div class="abs fld" style="left:40.2px;top:334.5px;width:708.6px;height:39.0px;"><span class="flab">Description</span></div>
<div class="abs fld" style="left:40.2px;top:390.2px;width:708.6px;height:39.8px;"><svg class="abs" style="right:7px;top:7px" width="24" height="24" viewBox="0 0 24 24"><path d="M7 10l5 5 5-5z" fill="#6b6b6b"/></svg></div>
<div class="abs fph" style="left:54px;top:400.3px;font-size:16px;line-height:21px;white-space:nowrap;">Category</div>
<div class="abs fld" style="left:40.2px;top:446.3px;width:238.0px;height:39.6px;"><span class="flab">Quantity</span></div>
<div class="abs fval" style="left:53.8px;top:454.7px;font-size:16px;line-height:21px;white-space:nowrap;">0</div>
<div class="abs fld" style="left:286px;top:446.3px;width:99.5px;height:39.6px;"><span class="flab">Unit</span></div>
<div class="abs fld" style="left:402px;top:446.3px;width:346.8px;height:39.6px;"><span class="flab">Unit Price</span></div>
<div class="abs fval" style="left:415.6px;top:454.7px;font-size:16px;line-height:21px;white-space:nowrap;">0</div>
<div class="abs mbtn save" style="left:40.2px;top:502px;width:92.6px;height:35.8px;"><svg class="abs" style="left:13px;top:9px" width="18" height="18" viewBox="0 0 24 24"><path d="M17 3H5a2 2 0 0 0-2 2v14a2 2 0 0 0 2 2h14c1.100 0 2-.9 2-2V7l-4-4zm-5 16c-1.660 0-3-1.340-3-3s1.340-3 3-3 3 1.340 3 3-1.340 3-3 3zm3-10H5V5h10v4z" fill="#fff"/></svg><span class="abs" style="left:39px;top:0">SAVE</span></div>
<div class="abs cbtn" style="left:633px;top:502px;width:115.8px;height:35.8px;"><svg class="abs" style="left:11px;top:8px" width="18" height="18" viewBox="0 0 24 24"><path d="M12 2C6.470 2 2 6.470 2 12s4.470 10 10 10 10-4.470 10-10S17.530 2 12 2zm5 13.590L15.590 17 12 13.410 8.410 17 7 15.590 10.590 12 7 8.410 8.410 7 12 10.590 15.590 7 17 8.410 13.410 12 17 15.590z" fill="#9c27b0"/></svg><span class="abs" style="left:39px;top:0">CANCEL</span></div>
<div class="abs th" style="left:31.6px;top:581.1px;font-size:14px;line-height:18px;white-space:nowrap;">Description</div>
<div class="abs th" style="left:146.3px;top:581.1px;font-size:14px;line-height:18px;white-space:nowrap;">Category</div>
<div class="abs th" style="left:246.3px;top:581.1px;font-size:14px;line-height:18px;white-space:nowrap;">Quantity</div>
<div class="abs th" style="left:341.2px;top:581.1px;font-size:14px;line-height:18px;white-space:nowrap;">Unit</div>
<div class="abs th" style="left:405px;top:581.1px;font-size:14px;line-height:18px;white-space:nowrap;">Unit Price</div>
<div class="abs th" style="left:509px;top:581.1px;font-size:14px;line-height:18px;white-space:nowrap;">Amount</div>
<div class="abs th" style="left:598.8px;top:581.1px;font-size:14px;line-height:18px;white-space:nowrap;">Actions</div>
<div class="abs th" style="left:686.8px;top:581.1px;font-size:14px;line-height:18px;white-space:nowrap;">Warnings</div>
<div class="abs hr1" style="left:16.3px;top:618px;width:756.7px;height:1px;"></div>
<div class="abs tb" style="left:409.3px;top:636.1px;font-size:14px;line-height:18px;white-space:nowrap;">Sub Total:</div>
<div class="abs tb" style="left:509px;top:636.1px;font-size:14px;line-height:18px;white-space:nowrap;">$0.00</div>
<div class="abs tpaper" style="left:16.3px;top:563px;width:756.7px;height:108.3px;"></div>
<div class="abs sum" style="left:16.3px;top:680.4px;width:756.7px;height:92.6px;"></div>
<div class="abs sl" style="left:25.2px;top:690.3px;font-size:16px;line-height:21px;white-space:nowrap;">Sub Total:</div>
<div class="abs sl" style="left:25.2px;top:714.3px;font-size:16px;line-height:21px;white-space:nowrap;letter-spacing:.1px">Total Tax Amount:</div>
<div class="abs sl" style="left:25.2px;top:738.9px;font-size:18.5px;line-height:24px;white-space:nowrap;letter-spacing:.25px">Total:</div>
<div class="abs sv" style="left:563.3px;width:200px;text-align:right;top:690.3px;font-size:16px;line-height:21px;white-space:nowrap">0.00</div>
<div class="abs sv" style="left:563.3px;width:200px;text-align:right;top:714.3px;font-size:16px;line-height:21px;white-space:nowrap">0.00</div>
<div class="abs sv" style="left:563.3px;width:200px;text-align:right;top:738.9px;font-size:18.5px;line-height:24px;white-space:nowrap">0.00</div>
<div class="abs hr1" style="left:16.3px;top:806px;width:756.7px;height:1px;"></div>
<div class="abs btnc" style="left:594.5px;top:823.3px;width:84.8px;height:38.7px;">Cancel</div>
<div class="abs btns" style="left:688px;top:823.3px;width:85px;height:38.7px;">Submit</div>
<div class="abs vs" style="left:789.5px;top:0px;width:22.5px;height:844.5px;"><svg class="abs" style="left:2.500px;top:8px" width="17" height="10" viewBox="0 0 17 10"><path d="M1 9.500 8.500 1 16 9.500Z" fill="#8b8b8b"/></svg><div class="abs sthumb" style="left:4.500px;top:27px;width:13px;height:758px"></div><svg class="abs" style="left:2.500px;top:828.500px" width="17" height="10" viewBox="0 0 17 10"><path d="M1 .5 8.500 9 16 .5Z" fill="#8b8b8b"/></svg></div>
</div>
<!--FORM1-->
</body>
</html>
